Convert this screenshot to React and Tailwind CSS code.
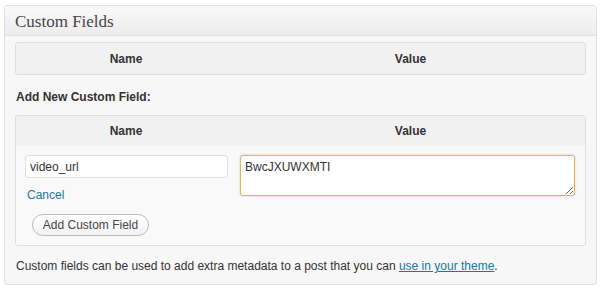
export default function App() {
  return (
    <div className="w-[603px] h-[292px] bg-white pt-[5px] pl-[4px] font-['Liberation_Sans',Arial,sans-serif] text-[12px] text-[#333]">
      <div className="w-[593px] h-[280px] border border-[#dfdfdf] rounded-[3px] bg-[#f7f7f7] shadow-[inset_0_1px_0_#fff]">
        {/* Header */}
        <div className="h-[30px] border-b border-[#dfdfdf] bg-gradient-to-b from-[#f9f9f9] to-[#ececec] pl-[10px] flex items-center">
          <h3 className="font-['Liberation_Serif',Georgia,serif] text-[17px] text-[#464646] leading-none pt-[2px]">
            Custom Fields
          </h3>
        </div>

        <div className="px-[10px] pt-[6px]">
          {/* Existing fields */}
          <div className="h-[33px] border border-[#dfdfdf] rounded-[3px] bg-[#f1f1f1] flex items-center font-bold text-[#333]">
            <div className="w-[220px] text-center">Name</div>
            <div className="flex-1 text-center">Value</div>
          </div>

          <p className="mt-[13px] font-bold pl-[1px]">Add New Custom Field:</p>

          {/* New field */}
          <div className="mt-[9px] h-[131px] border border-[#dfdfdf] rounded-[3px] bg-[#f9f9f9]">
            <div className="h-[30px] bg-[#f1f1f1] flex items-center font-bold">
              <div className="w-[220px] text-center">Name</div>
              <div className="flex-1 text-center">Value</div>
            </div>
            <div className="flex pt-[9px]">
              <div className="w-[224px] pl-[9px] flex flex-col">
                <input
                  defaultValue="video_url"
                  className="w-[203px] h-[23px] border border-[#dfdfdf] rounded-[3px] bg-white px-[4px] text-[12px] text-[#333] outline-none"
                />
                <a className="mt-[9px] ml-[2px] text-[#21759b] text-[12px] leading-[16px]">Cancel</a>
                <button className="mt-[11px] ml-[7px] w-[117px] h-[22px] rounded-full border border-[#bbb] bg-gradient-to-b from-[#fefefe] to-[#f2f2f2] text-[12px] text-[#464646] leading-none">
                  Add Custom Field
                </button>
              </div>
              <div>
                <textarea
                  defaultValue="BwcJXUWXMTI"
                  className="w-[335px] h-[41px] border border-[#e4b55c] rounded-[3px] bg-white px-[4px] py-[2px] text-[12px] text-[#333] outline-none shadow-[0_0_2px_rgba(228,181,92,0.8)] resize-y"
                />
              </div>
            </div>
          </div>

          <p className="mt-[11px] pl-[1px] text-[12px] text-[#333]">
            Custom fields can be used to add extra metadata to a post that you can{" "}
            <a className="text-[#21759b] underline">use in your theme</a>.
          </p>
        </div>
      </div>
    </div>
  );
}
